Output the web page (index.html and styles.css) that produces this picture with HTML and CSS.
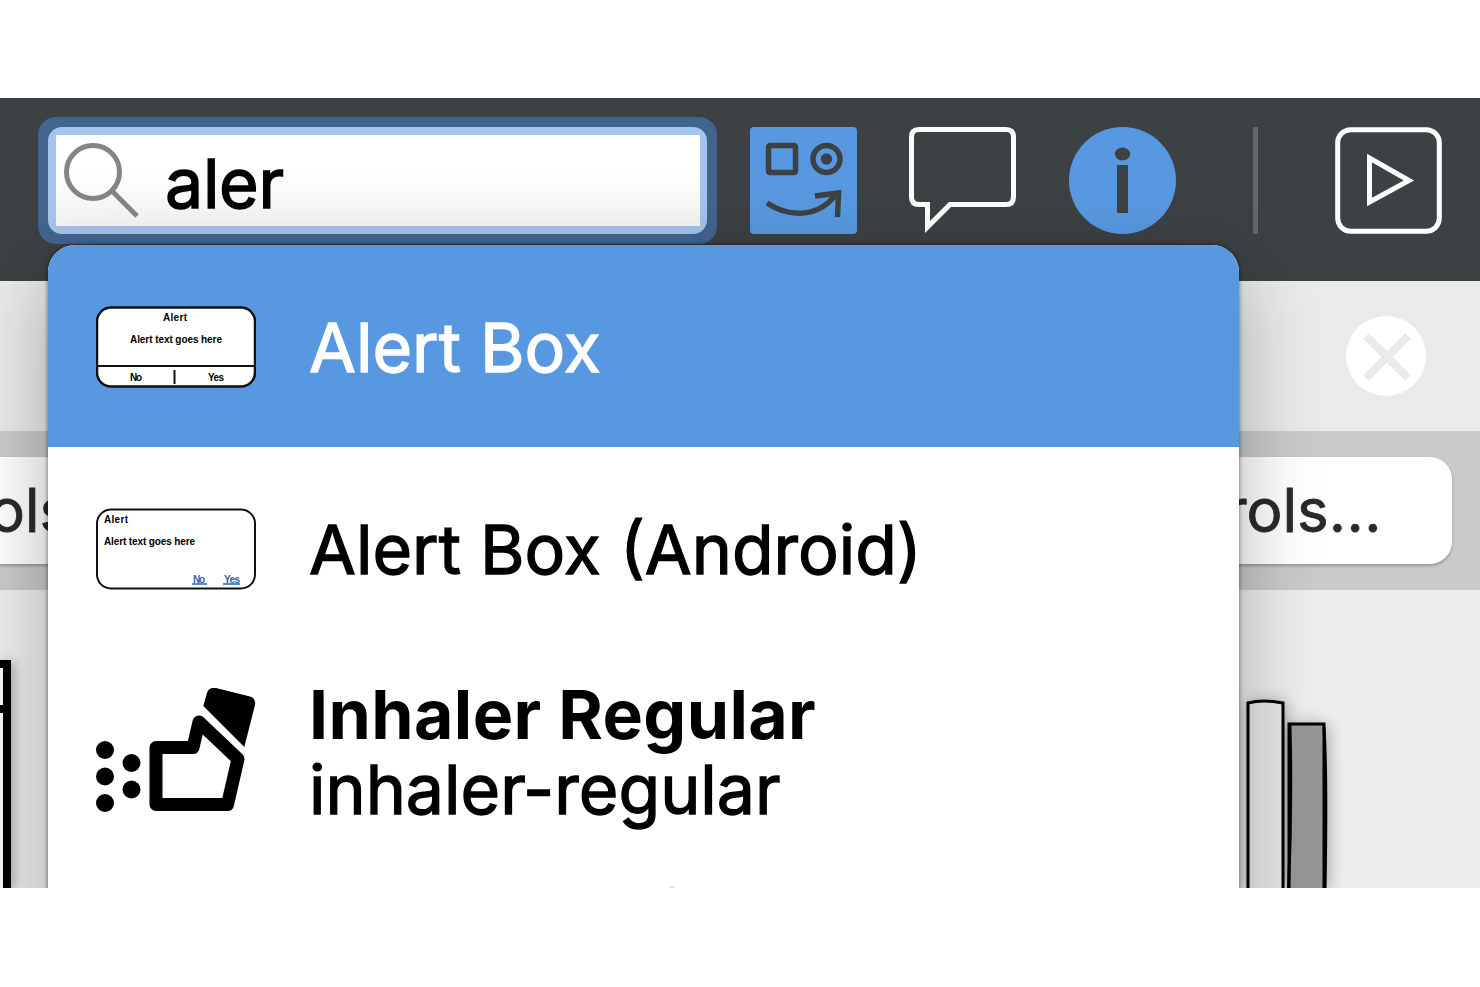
FILE: index.html
```html
<!DOCTYPE html>
<html lang="en">
<head>
<meta charset="utf-8">
<title>Quick Add</title>
<link rel="stylesheet" href="styles.css">
</head>
<body>
<main class="app">
  <header class="toolbar">
    <div class="search">
      <div class="search-field">
        <svg class="search-icon" viewBox="0 0 76 76"><circle cx="30" cy="30" r="26.500"/><path d="M49 49L74 74"/></svg>
        <span class="search-text">aler</span>
      </div>
    </div>
    <svg class="tool tool-library" viewBox="0 0 107 107">
      <rect class="fill-blue" width="107" height="107" rx="4"/>
      <rect class="dark-line" x="18.500" y="18.500" width="27" height="27" rx="1.500"/>
      <circle class="dark-line" cx="76.500" cy="32" r="13.500"/>
      <circle class="fill-dark" cx="76.500" cy="32" r="5.700"/>
      <path class="dark-line" d="M17 76C38 90 68 92 86 67"/>
      <path class="dark-line" d="M65 69L88.500 66L87.500 90"/>
    </svg>
    <svg class="tool tool-comment" viewBox="0 0 107 107"><path class="light-line" d="M10 2.500H97Q104.500 2.500 104.500 10V70Q104.500 77.500 97 77.500H41L18.500 100V77.500H10Q2.500 77.500 2.500 70V10Q2.500 2.500 10 2.500Z"/></svg>
    <svg class="tool tool-info" viewBox="0 0 107 107">
      <circle class="fill-blue" cx="53.500" cy="53.500" r="53.500"/>
      <ellipse class="fill-dark" cx="53.500" cy="27" rx="7.700" ry="6.500"/>
      <rect class="fill-dark" x="48" y="38" width="11" height="48"/>
    </svg>
    <span class="divider"></span>
    <svg class="tool tool-play" viewBox="0 0 107 107"><rect class="light-line" x="2.700" y="2.700" width="101.600" height="101.600" rx="13"/><path class="light-line" d="M34.500 31V75L74 53.500Z"/></svg>
  </header>
  <section class="notice">
    <svg class="close" viewBox="0 0 80 80"><circle cx="40" cy="40" r="40"/><path d="M20 20L62 62M62 20L20 62"/></svg>
  </section>
  <nav class="filters">
    <div class="filter filter-first">ols</div>
    <div class="filter filter-last">rols<span class="dots">...</span></div>
  </nav>
  <section class="canvas">
    <svg class="window-shape" viewBox="0 0 20 228"><path class="window-body" d="M-6 4H7V240H-6Z"/><path class="window-line" d="M0 49H7"/></svg>
    <svg class="books-shape" viewBox="0 0 90 190">
      <path class="book book-light" d="M5 5Q20 1 40 5V200H5Z"/>
      <path class="book book-dark" d="M46 26H81V200H46Z"/>
      <path class="book-edge" d="M47 27Q49 110 45.500 192M81 29Q84 80 82 192"/>
    </svg>
  </section>

  <div class="menu">
    <div class="row row-selected">
      <svg class="thumb" viewBox="0 0 160 82">
        <rect class="box" x="1" y="1.500" width="158" height="79" rx="14"/>
        <path class="box-line" d="M2 60H158M78.500 64V78"/>
        <text x="67" y="15" textLength="24">Alert</text>
        <text x="34" y="37" textLength="92">Alert text goes here</text>
        <text x="34" y="75" textLength="12">No</text>
        <text x="112" y="75" textLength="16">Yes</text>
      </svg>
      <div class="label"><span>Alert Box</span></div>
    </div>
    <div class="row">
      <svg class="thumb" viewBox="0 0 160 82">
        <rect class="box box-thin" x="1" y="1.500" width="158" height="79" rx="14"/>
        <text x="8" y="15" textLength="24">Alert</text>
        <text x="8" y="37" textLength="91">Alert text goes here</text>
        <text class="link" x="97" y="75" textLength="12">No</text>
        <text class="link" x="128" y="75" textLength="16">Yes</text>
        <path class="link-line" d="M96 76H111M127 76H144"/>
      </svg>
      <div class="label"><span>Alert Box (Android)</span></div>
    </div>
    <div class="row">
      <svg class="inhaler" viewBox="0 0 160 124">
        <g><circle cx="9" cy="62" r="9"/><circle cx="9" cy="88.500" r="9"/><circle cx="9" cy="115" r="9"/><circle cx="35.500" cy="75" r="9"/><circle cx="35.500" cy="101.500" r="9"/></g>
        <path class="inhaler-body" d="M60 59.500H97L103 34L142 71L131.500 116.500H60Z"/>
        <path d="M107.300 18L111 5Q113 -1 120 0L154 8.500Q160 10.500 159 17L148.300 59Z"/>
      </svg>
      <div class="label label-double"><strong>Inhaler Regular</strong><span>inhaler-regular</span></div>
    </div>
    <div class="row row-next"><span class="peek"></span></div>
  </div>
</main>
</body>
</html>
```
FILE: styles.css
```css
body { margin: 0; background: #fff; font-family: Inter, "Liberation Sans", sans-serif; }
.app { position: relative; height: 790px; margin-top: 98px; overflow: hidden; background: #ededed; }
svg { display: block; flex: none; }

.toolbar { display: flex; align-items: flex-start; height: 183px; box-sizing: border-box; padding: 19px 0 0 38px; background: #3c4144; }
.search { box-sizing: border-box; width: 679px; height: 127px; padding: 10px; border-radius: 18px; background: #42658f; }
.search-field { display: flex; box-sizing: border-box; width: 659px; height: 107px; padding: 8px; border-radius: 14px; background: linear-gradient(#fff 35%, #f4f4f4) 8px 8px / 644px 91px no-repeat, #a3c4ec; }
.search-icon { width: 76px; height: 76px; margin: 7px 0 0 7px; fill: none; stroke: #858585; stroke-width: 5; }
.search-text { margin-left: 26px; font-size: 68px; line-height: 97px; letter-spacing: -.3px; color: #000; -webkit-text-stroke: 1.4px #000; }
.tool { width: 107px; height: 107px; margin-top: 10px; overflow: visible; }
.tool-library { margin-left: 33px; }
.tool-comment { margin-left: 52px; }
.tool-info { margin-left: 53px; }
.tool-play { margin-left: 77px; }
.divider { width: 5px; height: 107px; margin: 10px 0 0 77px; background: #666; }
.fill-blue { fill: #5898e0; }
.fill-dark { fill: #3c4144; }
.dark-line { fill: none; stroke: #3c4144; stroke-width: 5.500; }
.light-line { fill: none; stroke: #fff; stroke-width: 5; }

.notice { display: flex; justify-content: flex-end; height: 150px; box-sizing: border-box; padding: 35px 54px 0 0; background: #e9ebea; }
.close { width: 80px; height: 80px; fill: #fff; stroke: none; }
.close path { stroke: #e9ebea; stroke-width: 8; }

.filters { display: flex; justify-content: space-between; height: 159px; box-sizing: border-box; padding-top: 26px; background: #c9cacc; }
.filter { box-sizing: border-box; height: 107px; border-radius: 22px; background: #fff; box-shadow: 0 2px 3px rgba(0,0,0,.25); font-size: 60px; line-height: 107px; color: #2a2a2a; white-space: nowrap; -webkit-text-stroke: .8px #2a2a2a; }
.filter-first { width: 160px; margin-left: -40px; padding-left: 29px; }
.filter-last { width: 300px; margin-right: 28px; padding-left: 73px; }
.dots { letter-spacing: .4px; }

.canvas { display: flex; justify-content: space-between; align-items: flex-end; height: 298px; background: #ededed; }
.window-shape { width: 20px; height: 228px; filter: drop-shadow(3px 2px 6px rgba(0,0,0,.3)); }
.window-body { fill: #f8f8f8; stroke: #000; stroke-width: 8; }
.window-line { stroke: #000; stroke-width: 8; }
.books-shape { width: 90px; height: 190px; margin-right: 147px; filter: drop-shadow(2px 2px 8px rgba(0,0,0,.3)); }
.book { stroke: #000; stroke-width: 3; }
.book-light { fill: #e6e6e6; }
.book-dark { fill: #979797; }
.book-edge { fill: none; stroke: #000; stroke-width: 3; }

.menu { position: absolute; left: 48px; top: 147px; width: 1191px; height: 800px; border-radius: 27px 27px 0 0; background: #fff; overflow: hidden; box-shadow: 0 0 4px rgba(0,0,0,.55), 0 28px 80px rgba(0,0,0,.3); }
.row { display: flex; align-items: center; height: 202px; box-sizing: border-box; padding: 2px 48px 0; gap: 53px; color: #000; }
.row-selected { background: #5898e0; color: #fff; }
.thumb { width: 160px; height: 82px; font: bold 10px "Liberation Sans", sans-serif; -webkit-text-stroke: 0; }
.box { fill: #fff; stroke: #111; stroke-width: 2.500; }
.box-thin { stroke-width: 2; }
.box-line { fill: none; stroke: #111; stroke-width: 2; }
.link { fill: #2c62ab; }
.link-line { stroke: #2c62ab; stroke-width: 1.500; }
.label { display: flex; flex-direction: column; font-size: 68px; line-height: 75px; white-space: nowrap; -webkit-text-stroke: 1.3px currentColor; }
.label strong { letter-spacing: .4px; -webkit-text-stroke: 0; }
.label-double { padding-top: 1px; }
.inhaler { width: 160px; height: 124px; margin-top: -2px; }
.inhaler-body { fill: none; stroke: #000; stroke-width: 13; stroke-linejoin: round; }
.row-next { align-items: flex-start; padding-top: 35px; }
.peek { width: 6px; height: 2px; margin-left: 573px; border-radius: 2px 2px 0 0; background: #e4e4e4; }
```
